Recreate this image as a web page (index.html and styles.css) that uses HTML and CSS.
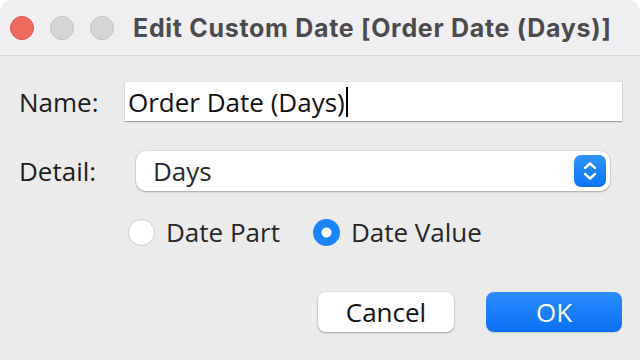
FILE: index.html
```html
<!DOCTYPE html>
<html lang="en">
<head>
  <meta charset="UTF-8">
  <meta name="viewport" content="width=device-width, initial-scale=1.0">
  <title>Edit Custom Date</title>
  <link rel="stylesheet" href="styles.css">
</head>
<body>
  <div class="window">
    <!-- 标题栏 -->
    <div class="titlebar">
      <span class="light light-close"></span>
      <span class="light"></span>
      <span class="light"></span>
      <span class="title">Edit Custom Date [Order Date (Days)]</span>
    </div>

    <div class="content">
      <div class="row row-name">
        <span class="label label-name">Name:</span>
        <div class="input">Order Date (Days)<span class="caret"></span></div>
      </div>

      <div class="row row-detail">
        <span class="label label-detail">Detail:</span>
        <div class="select">
          <span class="select-text">Days</span>
          <span class="stepper">
            <svg width="16" height="22" viewBox="0 0 16 22">
              <path d="M3 8 L8 3.5 L13 8" fill="none" stroke="#fff" stroke-width="2.4" stroke-linecap="round" stroke-linejoin="round"/>
              <path d="M3 14 L8 18.5 L13 14" fill="none" stroke="#fff" stroke-width="2.4" stroke-linecap="round" stroke-linejoin="round"/>
            </svg>
          </span>
        </div>
      </div>

      <div class="row row-radio">
        <span class="radio"></span>
        <span class="radio-text">Date Part</span>
        <span class="radio radio-on"></span>
        <span class="radio-text">Date Value</span>
      </div>

      <div class="row row-buttons">
        <div class="btn btn-cancel">Cancel</div>
        <div class="btn btn-ok">OK</div>
      </div>
    </div>
  </div>
</body>
</html>
```

FILE: styles.css
```css
/* 清除默认样式 */
*{
  margin: 0;
  padding: 0;
  box-sizing: border-box;
}
body{
  background-color: #fff;
  font-family: "Open Sans", "DejaVu Sans", sans-serif;
}
.window{
  width: 640px;
  height: 360px;
  background-color: #ebebeb;
  border-radius: 12px 12px 0 0;
  overflow: hidden;
}
/* 标题栏 */
.titlebar{
  height: 56px;
  background-color: #efeff1;
  border-bottom: 1px solid #d6d6d8;
  display: flex;
  align-items: center;
  padding-left: 10px;
}
.light{
  width: 24px;
  height: 24px;
  border-radius: 50%;
  background-color: #d5d5d8;
  border: 1px solid #c2c2c5;
  margin-right: 16px;
}
.light-close{
  background-color: #ef6a5e;
  border-color: #d9574c;
}
.title{
  margin-left: 3px;
  font-family: Inter, "Liberation Sans", sans-serif;
  font-weight: 700;
  font-size: 25px;
  letter-spacing: 0.7px;
  color: #4b4b4d;
}
/* 内容 */
.content{
  padding-left: 19px;
  color: #1c1c1c;
  font-size: 26px;
}
.row{
  display: flex;
  align-items: center;
}
.row-name{
  margin-top: 26px;
}
.label-name{
  width: 106px;
}
.input{
  width: 497px;
  height: 39px;
  background-color: #fff;
  box-shadow: 0 1px 1px rgba(0,0,0,.28), 0 0 0 1px rgba(0,0,0,.04);
  display: flex;
  align-items: center;
  padding-left: 3px;
  color: #111;
}
.caret{
  width: 2px;
  height: 30px;
  background-color: #000;
  margin-left: 1px;
}
.row-detail{
  margin-top: 30px;
}
.label-detail{
  width: 117px;
}
.select{
  width: 474px;
  height: 40px;
  background-color: #fff;
  border-radius: 10px;
  box-shadow: 0 1px 2px rgba(0,0,0,.25), 0 0 0 1px rgba(0,0,0,.05);
  display: flex;
  align-items: center;
  justify-content: space-between;
  padding: 0 4px 0 17px;
}
.select-text{
  color: #2a2a2a;
}
.stepper{
  width: 32px;
  height: 32px;
  border-radius: 7px;
  background: linear-gradient(#3293ff, #0b74f7);
  display: flex;
  align-items: center;
  justify-content: center;
}
.row-radio{
  margin-top: 27px;
  height: 28px;
  padding-left: 109px;
}
.radio{
  width: 27px;
  height: 27px;
  border-radius: 50%;
  background-color: #fff;
  border: 1px solid #cdcdcd;
  margin-right: 11px;
}
.radio-on{
  border: none;
  background: radial-gradient(circle, #fff 0 4.5px, #1a84fc 5.5px);
  margin-left: 33px;
}
.radio-text{
  color: #262626;
}
/* 按钮 */
.row-buttons{
  margin-top: 46px;
  justify-content: flex-end;
  padding-right: 18px;
}
.btn{
  width: 136px;
  height: 40px;
  border-radius: 8px;
  display: flex;
  align-items: center;
  justify-content: center;
}
.btn-cancel{
  background-color: #fff;
  color: #111;
  box-shadow: 0 1px 2px rgba(0,0,0,.3), 0 0 0 1px rgba(0,0,0,.04);
  margin-right: 32px;
}
.btn-ok{
  background: linear-gradient(#2b8cff, #0a6ff6);
  color: #fff;
  box-shadow: 0 1px 1px rgba(0,0,0,.15);
}
```
